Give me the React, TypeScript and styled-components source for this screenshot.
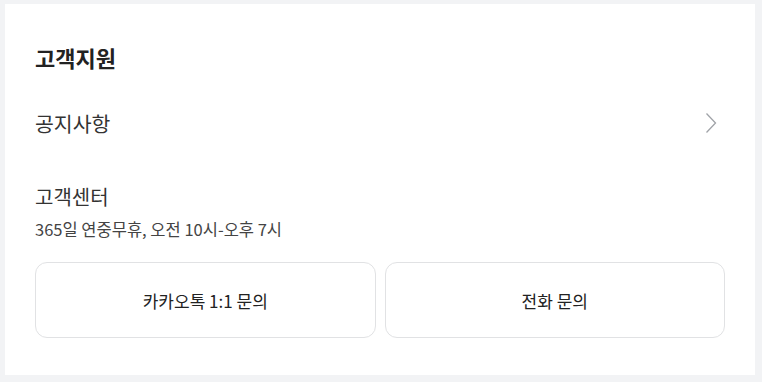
import styled, { createGlobalStyle } from "styled-components"

const GlobalStyle = createGlobalStyle`
  html, body {
    margin: 0;
    padding: 0;
    background: #f2f3f5;
    font-family: "Noto Sans CJK KR", "Noto Sans", sans-serif;
  }
  * {
    box-sizing: border-box;
  }
`

const ChevronIcon = () => (
  <svg width="12" height="22" viewBox="0 0 12 22" fill="none">
    <path d="M1.5 1.5L10.5 11L1.5 20.5" stroke="#a0a3a8" strokeWidth="1.3" />
  </svg>
)

const App = () => {
  return (
    <>
      <GlobalStyle />
      <Page>
        <Card>
          <Title>고객지원</Title>
          <NoticeRow>
            <RowLabel>공지사항</RowLabel>
            <ChevronIcon />
          </NoticeRow>
          <CenterTitle>고객센터</CenterTitle>
          <Hours>365일 연중무휴, 오전 10시-오후 7시</Hours>
          <Buttons>
            <ContactButton type="button">카카오톡 1:1 문의</ContactButton>
            <ContactButton type="button">전화 문의</ContactButton>
          </Buttons>
        </Card>
      </Page>
    </>
  )
}

const Page = styled.div`
  padding: 4px 7px 7px 5px;
`

const Card = styled.section`
  background: #fff;
  padding: 38px 30px 37px;
  display: flex;
  flex-direction: column;
`

const Title = styled.h2`
  margin: 0 0 18px;
  font-size: 22px;
  line-height: 30px;
  font-weight: 700;
  color: #222;
`

const NoticeRow = styled.div`
  display: flex;
  align-items: center;
  justify-content: space-between;
  padding: 18px 8px 18px 0;
  cursor: pointer;
`

const RowLabel = styled.span`
  font-size: 20.5px;
  line-height: 30px;
  color: #333;
`

const CenterTitle = styled.h3`
  margin: 26px 0 0;
  font-size: 20px;
  line-height: 30px;
  font-weight: 400;
  color: #333;
`

const Hours = styled.p`
  margin: 5px 0 0;
  font-size: 16.5px;
  line-height: 24px;
  color: #444;
`

const Buttons = styled.div`
  margin-top: 21px;
  display: grid;
  grid-template-columns: 1fr 1fr;
  gap: 9px;
`

const ContactButton = styled.button`
  height: 76px;
  background: #fff;
  border: 1px solid #e1e2e4;
  border-radius: 12px;
  font-family: inherit;
  font-size: 17px;
  color: #222;
  cursor: pointer;
`

export default App
